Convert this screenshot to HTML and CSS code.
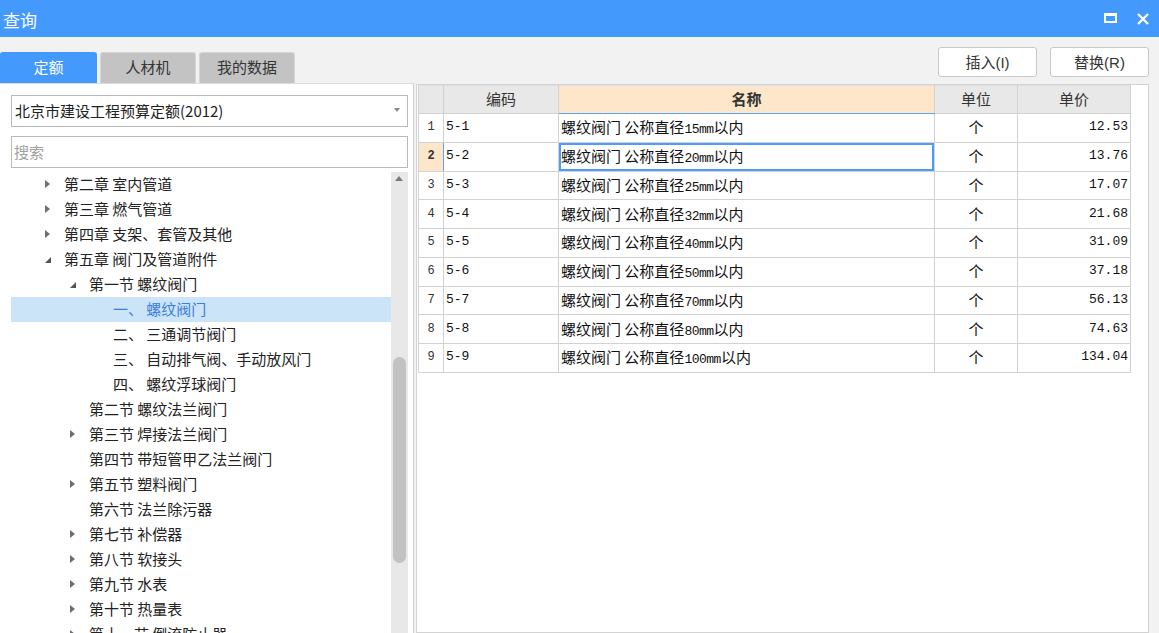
FILE: index.html
```html
<!DOCTYPE html>
<html lang="zh">
<head>
<meta charset="utf-8">
<title>查询</title>
<link rel="stylesheet" href="styles.css">
</head>
<body>
<div class="titlebar">
  <span class="title-text">查询</span>
  <div class="win-ctrl">
    <span class="max-icon"></span>
    <svg class="close-icon" width="12" height="12" viewBox="0 0 12 12"><path d="M1 1 L11 11 M11 1 L1 11" stroke="#fff" stroke-width="2.4" fill="none"/></svg>
  </div>
</div>
<div class="main">
  <div class="left">
    <div class="tabs">
      <div class="tab active">定额</div>
      <div class="tab">人材机</div>
      <div class="tab">我的数据</div>
    </div>
    <div class="lpanel">
      <div class="select">北京市建设工程预算定额(2012)<span class="caret"></span></div>
      <div class="search">搜索</div>
      <div class="treewrap">
        <div class="tree">
          <div class="node l1"><span class="tw"><span class="ar-r"></span></span>第二章 室内管道</div>
          <div class="node l1"><span class="tw"><span class="ar-r"></span></span>第三章 燃气管道</div>
          <div class="node l1"><span class="tw"><span class="ar-r"></span></span>第四章 支架、套管及其他</div>
          <div class="node l1"><span class="tw"><span class="ar-d"></span></span>第五章 阀门及管道附件</div>
          <div class="node l2"><span class="tw"><span class="ar-d"></span></span>第一节 螺纹阀门</div>
          <div class="node l3 sel">一、 螺纹阀门</div>
          <div class="node l3">二、 三通调节阀门</div>
          <div class="node l3">三、 自动排气阀、手动放风门</div>
          <div class="node l3">四、 螺纹浮球阀门</div>
          <div class="node l2"><span class="tw"></span>第二节 螺纹法兰阀门</div>
          <div class="node l2"><span class="tw"><span class="ar-r"></span></span>第三节 焊接法兰阀门</div>
          <div class="node l2"><span class="tw"></span>第四节 带短管甲乙法兰阀门</div>
          <div class="node l2"><span class="tw"><span class="ar-r"></span></span>第五节 塑料阀门</div>
          <div class="node l2"><span class="tw"></span>第六节 法兰除污器</div>
          <div class="node l2"><span class="tw"><span class="ar-r"></span></span>第七节 补偿器</div>
          <div class="node l2"><span class="tw"><span class="ar-r"></span></span>第八节 软接头</div>
          <div class="node l2"><span class="tw"><span class="ar-r"></span></span>第九节 水表</div>
          <div class="node l2"><span class="tw"><span class="ar-r"></span></span>第十节 热量表</div>
          <div class="node l2"><span class="tw"><span class="ar-r"></span></span>第十一节 倒流防止器</div>
        </div>
        <div class="vscroll">
          <span class="up"></span>
          <span class="thumb"></span>
        </div>
      </div>
    </div>
  </div>
  <div class="right">
    <div class="btns">
      <button class="btn">插入(I)</button>
      <button class="btn">替换(R)</button>
    </div>
    <div class="rpanel">
      <table class="grid">
        <colgroup>
          <col class="w-no"><col class="w-code"><col class="w-name"><col class="w-unit"><col class="w-price">
        </colgroup>
        <thead>
          <tr><th></th><th>编码</th><th class="hsel">名称</th><th>单位</th><th>单价</th></tr>
        </thead>
        <tbody>
          <tr><td class="no">1</td><td class="code">5-1</td><td class="name">螺纹阀门 公称直径<span class="n">15mm</span>以内</td><td class="unit">个</td><td class="price">12.53</td></tr>
          <tr class="cur"><td class="no">2</td><td class="code">5-2</td><td class="name focus">螺纹阀门 公称直径<span class="n">20mm</span>以内</td><td class="unit">个</td><td class="price">13.76</td></tr>
          <tr><td class="no">3</td><td class="code">5-3</td><td class="name">螺纹阀门 公称直径<span class="n">25mm</span>以内</td><td class="unit">个</td><td class="price">17.07</td></tr>
          <tr><td class="no">4</td><td class="code">5-4</td><td class="name">螺纹阀门 公称直径<span class="n">32mm</span>以内</td><td class="unit">个</td><td class="price">21.68</td></tr>
          <tr><td class="no">5</td><td class="code">5-5</td><td class="name">螺纹阀门 公称直径<span class="n">40mm</span>以内</td><td class="unit">个</td><td class="price">31.09</td></tr>
          <tr><td class="no">6</td><td class="code">5-6</td><td class="name">螺纹阀门 公称直径<span class="n">50mm</span>以内</td><td class="unit">个</td><td class="price">37.18</td></tr>
          <tr><td class="no">7</td><td class="code">5-7</td><td class="name">螺纹阀门 公称直径<span class="n">70mm</span>以内</td><td class="unit">个</td><td class="price">56.13</td></tr>
          <tr><td class="no">8</td><td class="code">5-8</td><td class="name">螺纹阀门 公称直径<span class="n">80mm</span>以内</td><td class="unit">个</td><td class="price">74.63</td></tr>
          <tr><td class="no">9</td><td class="code">5-9</td><td class="name">螺纹阀门 公称直径<span class="n">100mm</span>以内</td><td class="unit">个</td><td class="price">134.04</td></tr>
        </tbody>
      </table>
    </div>
  </div>
</div>
</body>
</html>
```
FILE: styles.css
```css
* { box-sizing: border-box; }
html, body {
  margin: 0;
  padding: 0;
  height: 633px;
  overflow: hidden;
}
body {
  background: #f2f2f2;
  font-family: "Liberation Sans", "Noto Sans CJK SC", sans-serif;
  color: #222;
}
.titlebar {
  height: 37px;
  background: #4499fd;
  display: flex;
  align-items: center;
  justify-content: space-between;
  padding: 0 10px 0 3px;
}
.title-text {
  color: #fff;
  font-size: 17px;
  font-family: "Noto Sans CJK SC", sans-serif;
  line-height: 1;
  margin-top: 1px;
}
.win-ctrl {
  display: flex;
  align-items: center;
  gap: 20px;
}
.max-icon {
  width: 13px;
  height: 10px;
  border: 2px solid #fff;
  border-top-width: 3px;
  margin-top: -1px;
}
.close-icon { display: block; }

.main {
  display: flex;
  height: 596px;
}
.left {
  width: 414px;
  display: flex;
  flex-direction: column;
}
.tabs {
  height: 46px;
  padding-top: 15px;
  display: flex;
  gap: 3px;
}
.tab {
  width: 96px;
  height: 31px;
  background: #c3c3c3;
  border: 1px solid #d6d6d6;
  border-bottom: none;
  border-radius: 3px 3px 0 0;
  display: flex;
  align-items: center;
  justify-content: center;
  padding-bottom: 3px;
  font-family: "Noto Sans CJK SC", sans-serif;
  font-size: 15px;
  color: #333;
}
.tab.active {
  width: 97px;
  background: #4499fd;
  border-color: #4499fd;
  color: #fff;
}
.lpanel {
  flex: 1;
  background: #fff;
  border-top: 1px solid #dcdcdc;
  border-right: 1px solid #cfcfcf;
  padding-top: 11px;
  display: flex;
  flex-direction: column;
}
.select {
  margin-left: 11px;
  width: 397px;
  height: 32px;
  border: 1px solid #b9b9b9;
  display: flex;
  align-items: center;
  justify-content: space-between;
  padding: 0 7px 2px 3px;
  font-family: "Noto Sans CJK SC", sans-serif;
  font-size: 15px;
  color: #222;
}
.caret {
  width: 0;
  height: 0;
  border-left: 3.5px solid transparent;
  border-right: 3.5px solid transparent;
  border-top: 4px solid #8a8a8a;
}
.search {
  margin: 9px 0 0 11px;
  width: 397px;
  height: 32px;
  border: 1px solid #b9b9b9;
  display: flex;
  align-items: center;
  padding: 0 0 2px 2px;
  font-family: "Noto Sans CJK SC", sans-serif;
  font-size: 15px;
  color: #a0a0a0;
}
.treewrap {
  margin: 4px 0 0 11px;
  width: 397px;
  flex: 1;
  display: flex;
  min-height: 0;
}
.tree {
  flex: 1;
  overflow: hidden;
}
.node {
  height: 25px;
  display: flex;
  align-items: center;
  padding-bottom: 2px;
  font-family: "Noto Sans CJK SC", sans-serif;
  font-size: 15px;
  color: #222;
  white-space: pre;
}
.node.l1 { padding-left: 33px; }
.node.l2 { padding-left: 58px; }
.node.l3 { padding-left: 102px; }
.node.sel {
  background: #cce4f7;
  color: #3b7de0;
}
.tw {
  width: 20px;
  height: 23px;
  display: flex;
  align-items: center;
  flex: none;
}
.ar-r {
  width: 0;
  height: 0;
  border-top: 4.5px solid transparent;
  border-bottom: 4.5px solid transparent;
  border-left: 5px solid #6e6e6e;
  margin-left: 1px;
}
.ar-d {
  width: 0;
  height: 0;
  border-left: 6px solid transparent;
  border-bottom: 6px solid #555;
  margin-left: 1px;
  margin-top: 3px;
}
.vscroll {
  width: 17px;
  background: #e8e8e8;
  position: relative;
  flex: none;
}
.up {
  position: absolute;
  left: 4px;
  top: 4px;
  width: 0;
  height: 0;
  border-left: 4.5px solid transparent;
  border-right: 4.5px solid transparent;
  border-bottom: 5px solid #7a7a7a;
}
.thumb {
  position: absolute;
  left: 2px;
  top: 185px;
  width: 13px;
  height: 206px;
  border-radius: 7px;
  background: #c2c2c2;
}

.right {
  flex: 1;
  margin-left: 2px;
  display: flex;
  flex-direction: column;
  min-width: 0;
}
.btns {
  height: 47px;
  padding: 10px 10px 0 0;
  display: flex;
  justify-content: flex-end;
  align-items: flex-start;
  gap: 13px;
}
.btn {
  width: 99px;
  height: 30px;
  background: #fff;
  border: 1px solid #c9c9c9;
  border-radius: 3px;
  font-family: "Liberation Sans", "Noto Sans CJK SC", sans-serif;
  font-size: 15px;
  color: #333;
  padding: 0 0 2px 0;
}
.rpanel {
  flex: 1;
  margin-right: 10px;
  background: #fff;
  border: 1px solid #d3d3d3;
  padding: 0 0 0 1px;
}
.grid {
  border-collapse: collapse;
  table-layout: fixed;
  width: 712px;
  font-family: "Noto Sans CJK SC", sans-serif;
  font-size: 15px;
  color: #111;
}
.w-no { width: 25px; }
.w-code { width: 115px; }
.w-name { width: 376px; }
.w-unit { width: 83px; }
.w-price { width: 113px; }
.grid th, .grid td {
  border: 1px solid #d2d2d2;
  padding: 0 3px 2px 3px;
  white-space: nowrap;
  overflow: hidden;
}
.grid th {
  height: 28px;
  background: #e8e8e8;
  font-weight: normal;
  color: #333;
  text-align: center;
  border-top-color: #e0e0e0;
}
.grid th.hsel {
  background: #fde6c9;
  font-weight: bold;
  border-bottom: 1px solid #5aa2f5;
}
.grid td { height: 28.75px; }
.grid td.no {
  padding: 0 0 1px 0;
  text-align: center;
  font-family: "Liberation Mono", monospace;
  font-size: 12px;
  color: #333;
  background: #fff;
}
.grid tr.cur td.no {
  background: #fde6c9;
  font-weight: bold;
  border-right: 1px solid #5aa2f5;
}
.grid td.code {
  font-family: "Liberation Mono", monospace;
  font-size: 13px;
  padding-left: 2px;
}
.grid td.name { padding-left: 2px; }
.grid td.focus {
  box-shadow: inset 0 0 0 2px #4d9cf8;
}
.n {
  font-family: "Liberation Mono", monospace;
  font-size: 13px;
  letter-spacing: -0.5px;
}
.grid td.unit { text-align: center; }
.grid td.price {
  text-align: right;
  font-family: "Liberation Mono", monospace;
  font-size: 13px;
  padding-right: 2px;
}
```
